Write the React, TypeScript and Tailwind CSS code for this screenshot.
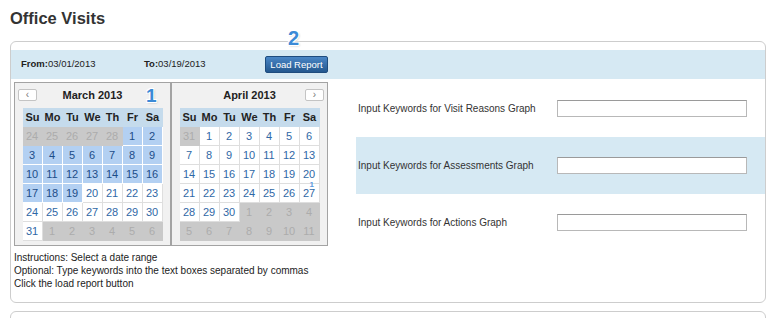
import React from 'react';

type Kind = 'other' | 'sel' | 'day';
interface Cell { n: number; kind: Kind; }

const days = ['Su', 'Mo', 'Tu', 'We', 'Th', 'Fr', 'Sa'];

const march: Cell[] = [
  ...[24, 25, 26, 27, 28].map((n) => ({ n, kind: 'other' as Kind })),
  ...Array.from({ length: 31 }, (_, i) => ({ n: i + 1, kind: (i + 1 <= 19 ? 'sel' : 'day') as Kind })),
  ...[1, 2, 3, 4, 5, 6].map((n) => ({ n, kind: 'other' as Kind })),
];

const april: Cell[] = [
  { n: 31, kind: 'other' },
  ...Array.from({ length: 30 }, (_, i) => ({ n: i + 1, kind: 'day' as Kind })),
  ...[1, 2, 3, 4, 5, 6, 7, 8, 9, 10, 11].map((n) => ({ n, kind: 'other' as Kind })),
];

const cellClass: Record<Kind, string> = {
  other: 'bg-[#c9c9c9] text-[#acacac] border-[#c9c9c9]',
  sel: 'bg-[#b3d0f2] text-[#1c4d88] border-white',
  day: 'bg-white text-[#2f68a6] border-[#dedede]',
};

const Badge: React.FC<{ n: string; className: string }> = ({ n, className }) => (
  <span
    className={`absolute font-bold text-[#3b8ad6] leading-none ${className}`}
    style={{ textShadow: '-1px -1px 0 #fff, 1px -1px 0 #fff, -1px 1px 0 #fff, 1px 1px 0 #fff, 1px 1px 2px rgba(0,0,0,0.3)' }}
  >
    {n}
  </span>
);

const NavBtn: React.FC<{ glyph: string }> = ({ glyph }) => (
  <div className="w-[19px] h-[12px] mt-[-2px] bg-white border border-[#c4c4c4] rounded-[2px] flex items-center justify-center text-[10px] leading-none text-[#777]">{glyph}</div>
);

const Month: React.FC<{ title: string; cells: Cell[]; side: 'prev' | 'next'; badge?: boolean; cursor?: boolean }> = ({ title, cells, side, badge, cursor }) => (
  <div className="relative w-[157px] h-[164px] border border-[#a3a3a3] bg-[#f1f1f1]">
    <div className="flex items-center h-[25px] px-[3px]">
      <div className="w-[19px]">{side === 'prev' && <NavBtn glyph="‹" />}</div>
      <div className="flex-1 text-center text-[11px] font-bold text-[#222]">{title}</div>
      <div className="w-[19px]">{side === 'next' && <NavBtn glyph="›" />}</div>
    </div>
    {badge && <Badge n="1" className="text-[19px] left-[131px] top-[3px]" />}
    <div className="w-[140px] mx-auto grid grid-cols-7">
      {days.map((d) => (
        <div key={d} className="h-[19px] bg-[#c5dbec] flex items-center justify-center text-[11px] font-bold text-[#222]">{d}</div>
      ))}
      {cells.map((c, i) => (
        <div key={i} className={`relative h-[19px] border-r border-b flex items-center justify-center text-[11px] ${cellClass[c.kind]}`}>
          {c.n}
          {cursor && c.kind === 'day' && c.n === 27 && (
            <span className="absolute left-[10px] top-[-3px] text-[8px] font-bold text-[#5b9be0] leading-none">1</span>
          )}
        </div>
      ))}
    </div>
  </div>
);

const KeywordRow: React.FC<{ label: string; shaded?: boolean }> = ({ label, shaded }) => (
  <div className={`flex items-center h-[57px] pl-[2px] ${shaded ? 'bg-[#d6e9f3]' : ''}`}>
    <div className="w-[199px] text-[10px] text-[#333]">{label}</div>
    <input type="text" className="w-[190px] h-[17px] bg-white border border-[#b8b8b8] border-t-[#9a9a9a] outline-none" />
  </div>
);

export default function App() {
  return (
    <div className="w-[768px] h-[318px] overflow-hidden bg-white" style={{ fontFamily: '"Liberation Sans", Arial, sans-serif' }}>
      <h1 className="pl-[10px] pt-[8px] h-[41px] text-[16.5px] font-bold text-[#333] leading-[20px]">Office Visits</h1>
      <div className="relative ml-[10px] w-[756px] h-[262px] border border-[#cdcdcd] rounded-[6px] pt-[8px]">
        <Badge n="2" className="text-[20px] left-[277px] top-[-14px]" />
        <div className="flex items-center h-[29px] bg-[#d6e9f3] text-[9.5px] text-[#222]">
          <div className="w-[133px] pl-[10px]"><span className="font-bold">From:</span>03/01/2013</div>
          <div className="w-[121px]"><span className="font-bold">To:</span>03/19/2013</div>
          <button className="w-[63px] h-[17px] rounded-[2px] border border-[#1e4c7e] bg-gradient-to-b from-[#4a86c6] to-[#23588f] text-white text-[9.5px] leading-none">Load Report</button>
        </div>
        <div className="flex items-start">
          <div className="ml-[3px] pt-[3px] w-[314px]">
            <div className="flex">
              <Month title="March 2013" cells={march} side="prev" badge />
              <Month title="April 2013" cells={april} side="next" cursor />
            </div>
            <div className="mt-[5px] text-[10px] leading-[13px] text-[#222]">
              <div>Instructions: Select a date range</div>
              <div>Optional: Type keywords into the text boxes separated by commas</div>
              <div>Click the load report button</div>
            </div>
          </div>
          <div className="ml-[28px] pt-[1px] flex-1">
            <KeywordRow label="Input Keywords for Visit Reasons Graph" />
            <KeywordRow label="Input Keywords for Assessments Graph" shaded />
            <KeywordRow label="Input Keywords for Actions Graph" />
          </div>
        </div>
      </div>
      <div className="ml-[10px] mt-[8px] w-[756px] h-[40px] border border-[#cdcdcd] rounded-[6px]" />
    </div>
  );
}
